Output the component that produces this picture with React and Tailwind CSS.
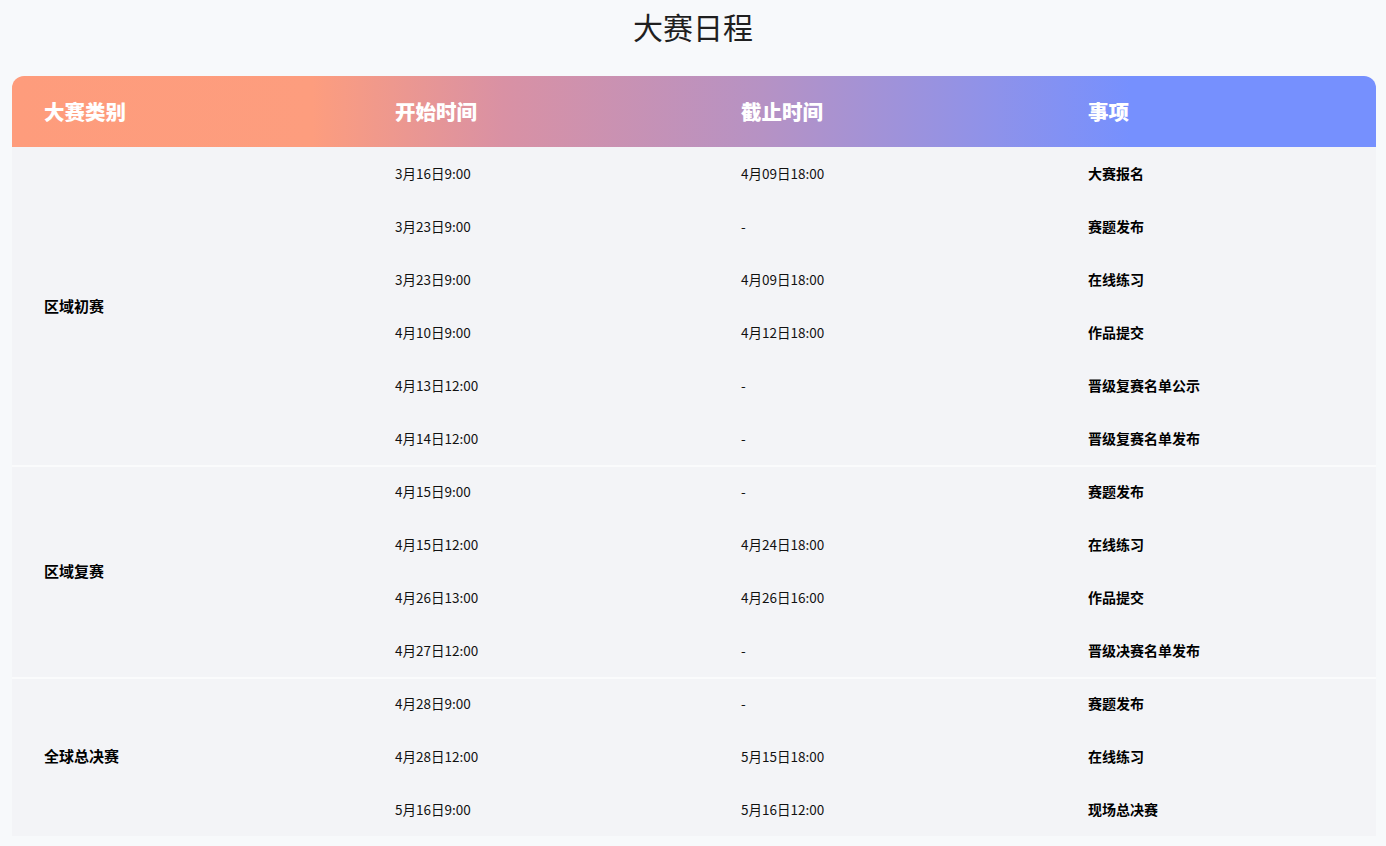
import React from 'react';

const groups = [
    {
        name: '区域初赛',
        rows: [
            ['3月16日9:00', '4月09日18:00', '大赛报名'],
            ['3月23日9:00', '-', '赛题发布'],
            ['3月23日9:00', '4月09日18:00', '在线练习'],
            ['4月10日9:00', '4月12日18:00', '作品提交'],
            ['4月13日12:00', '-', '晋级复赛名单公示'],
            ['4月14日12:00', '-', '晋级复赛名单发布'],
        ],
    },
    {
        name: '区域复赛',
        rows: [
            ['4月15日9:00', '-', '赛题发布'],
            ['4月15日12:00', '4月24日18:00', '在线练习'],
            ['4月26日13:00', '4月26日16:00', '作品提交'],
            ['4月27日12:00', '-', '晋级决赛名单发布'],
        ],
    },
    {
        name: '全球总决赛',
        rows: [
            ['4月28日9:00', '-', '赛题发布'],
            ['4月28日12:00', '5月15日18:00', '在线练习'],
            ['5月16日9:00', '5月16日12:00', '现场总决赛'],
        ],
    },
];

const cols = 'grid grid-cols-[351px_346px_347px_1fr]';

const App = () => {
    return (
        <div
            className="min-h-[846px] bg-[#f7f9fb] px-[12px] pb-[10px]"
            style={{ fontFamily: '"Noto Sans CJK SC", "Noto Sans", sans-serif' }}
        >
            <h1 className="h-[76px] pt-[4px] text-center text-[30px] leading-[44px] text-[#1f1f1f]">
                大赛日程
            </h1>
            <div className="w-[1364px]">
                <div className={`${cols} h-[71px] items-center rounded-t-[12px] bg-[linear-gradient(to_right,#fe9c7c_0%,#fd9d7e_22%,#d991a4_36%,#b692c4_55%,#8e92ea_72%,#7690fe_82%,#7690fe_100%)] text-[20.5px] font-black text-white`}>
                    <div className="pl-[32px]">大赛类别</div>
                    <div className="pl-[32px]">开始时间</div>
                    <div className="pl-[32px]">截止时间</div>
                    <div className="pl-[32px]">事项</div>
                </div>
                <div className="bg-[#f3f4f7]">
                    {groups.map((group, gi) => (
                        <div
                            key={group.name}
                            className={`${cols} ${gi > 0 ? 'shadow-[inset_0_2px_0_#fafbfc]' : ''}`}
                        >
                            <div
                                className="flex items-center pl-[32px] text-[15px] font-bold text-black"
                                style={{ gridRow: `span ${group.rows.length}` }}
                            >
                                {group.name}
                            </div>
                            {group.rows.map((row, ri) => (
                                <React.Fragment key={ri}>
                                    <div className="flex h-[53px] items-center pl-[32px] text-[13.5px] text-[#111]">
                                        {row[0]}
                                    </div>
                                    <div className="flex h-[53px] items-center pl-[32px] text-[13.5px] text-[#111]">
                                        {row[1]}
                                    </div>
                                    <div className="flex h-[53px] items-center pl-[32px] text-[14px] font-bold text-black">
                                        {row[2]}
                                    </div>
                                </React.Fragment>
                            ))}
                        </div>
                    ))}
                </div>
            </div>
        </div>
    );
};

export default App;
